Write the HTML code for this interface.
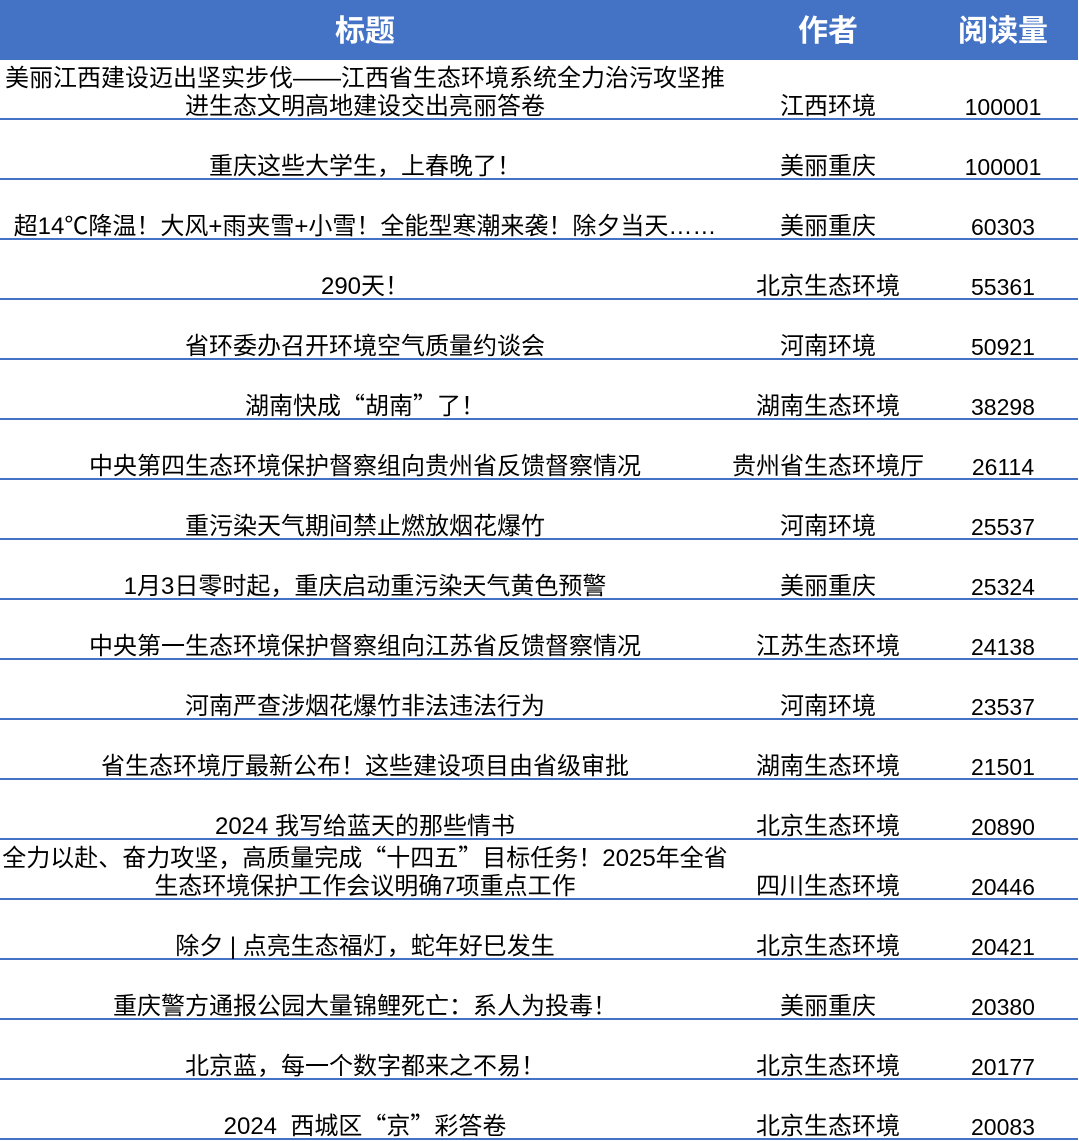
<!DOCTYPE html>
<html><head><meta charset="utf-8"><style>
*{margin:0;padding:0;box-sizing:border-box}
body{width:1079px;height:1141px;background:#fff;font-family:"Liberation Sans","Noto Sans CJK SC",sans-serif;color:#000;position:relative;overflow:hidden}
.h{position:absolute;left:0;top:0;width:1078px;height:60px;background:#4472C4;color:#fff;font-weight:bold;font-size:30px}
.h div{position:absolute;top:14px;text-align:center;line-height:36px}
.r{position:absolute;left:0;width:1078px;height:60px;border-bottom:2px solid #4472C4}
.c{position:absolute;bottom:-3px;text-align:center;font-size:24px;line-height:28px;white-space:nowrap}
.t{left:0;width:730px}.a{left:730px;width:196px}.n{left:928px;width:150px;font-size:23px}
.q{font-family:"Noto Sans CJK SC",sans-serif}
</style></head><body>
<div class="h"><div style="left:0;width:730px">标题</div><div style="left:730px;width:196px">作者</div><div style="left:928px;width:150px">阅读量</div></div>
<div class="r" style="top:60px"><div class="c t">美丽江西建设迈出坚实步伐——江西省生态环境系统全力治污攻坚推<br>进生态文明高地建设交出亮丽答卷</div><div class="c a">江西环境</div><div class="c n">100001</div></div>
<div class="r" style="top:120px"><div class="c t">重庆这些大学生，上春晚了！</div><div class="c a">美丽重庆</div><div class="c n">100001</div></div>
<div class="r" style="top:180px"><div class="c t">超14℃降温！大风+雨夹雪+小雪！全能型寒潮来袭！除夕当天……</div><div class="c a">美丽重庆</div><div class="c n">60303</div></div>
<div class="r" style="top:240px"><div class="c t">290天！</div><div class="c a">北京生态环境</div><div class="c n">55361</div></div>
<div class="r" style="top:300px"><div class="c t">省环委办召开环境空气质量约谈会</div><div class="c a">河南环境</div><div class="c n">50921</div></div>
<div class="r" style="top:360px"><div class="c t">湖南快成<span class="q">“</span>胡南<span class="q">”</span>了！</div><div class="c a">湖南生态环境</div><div class="c n">38298</div></div>
<div class="r" style="top:420px"><div class="c t">中央第四生态环境保护督察组向贵州省反馈督察情况</div><div class="c a">贵州省生态环境厅</div><div class="c n">26114</div></div>
<div class="r" style="top:480px"><div class="c t">重污染天气期间禁止燃放烟花爆竹</div><div class="c a">河南环境</div><div class="c n">25537</div></div>
<div class="r" style="top:540px"><div class="c t">1月3日零时起，重庆启动重污染天气黄色预警</div><div class="c a">美丽重庆</div><div class="c n">25324</div></div>
<div class="r" style="top:600px"><div class="c t">中央第一生态环境保护督察组向江苏省反馈督察情况</div><div class="c a">江苏生态环境</div><div class="c n">24138</div></div>
<div class="r" style="top:660px"><div class="c t">河南严查涉烟花爆竹非法违法行为</div><div class="c a">河南环境</div><div class="c n">23537</div></div>
<div class="r" style="top:720px"><div class="c t">省生态环境厅最新公布！这些建设项目由省级审批</div><div class="c a">湖南生态环境</div><div class="c n">21501</div></div>
<div class="r" style="top:780px"><div class="c t">2024 我写给蓝天的那些情书</div><div class="c a">北京生态环境</div><div class="c n">20890</div></div>
<div class="r" style="top:840px"><div class="c t">全力以赴、奋力攻坚，高质量完成<span class="q">“</span>十四五<span class="q">”</span>目标任务！2025年全省<br>生态环境保护工作会议明确7项重点工作</div><div class="c a">四川生态环境</div><div class="c n">20446</div></div>
<div class="r" style="top:900px"><div class="c t">除夕 | 点亮生态福灯，蛇年好巳发生</div><div class="c a">北京生态环境</div><div class="c n">20421</div></div>
<div class="r" style="top:960px"><div class="c t">重庆警方通报公园大量锦鲤死亡：系人为投毒！</div><div class="c a">美丽重庆</div><div class="c n">20380</div></div>
<div class="r" style="top:1020px"><div class="c t">北京蓝，每一个数字都来之不易！</div><div class="c a">北京生态环境</div><div class="c n">20177</div></div>
<div class="r" style="top:1080px"><div class="c t">2024&nbsp; 西城区<span class="q">“</span>京<span class="q">”</span>彩答卷</div><div class="c a">北京生态环境</div><div class="c n">20083</div></div>
</body></html>
